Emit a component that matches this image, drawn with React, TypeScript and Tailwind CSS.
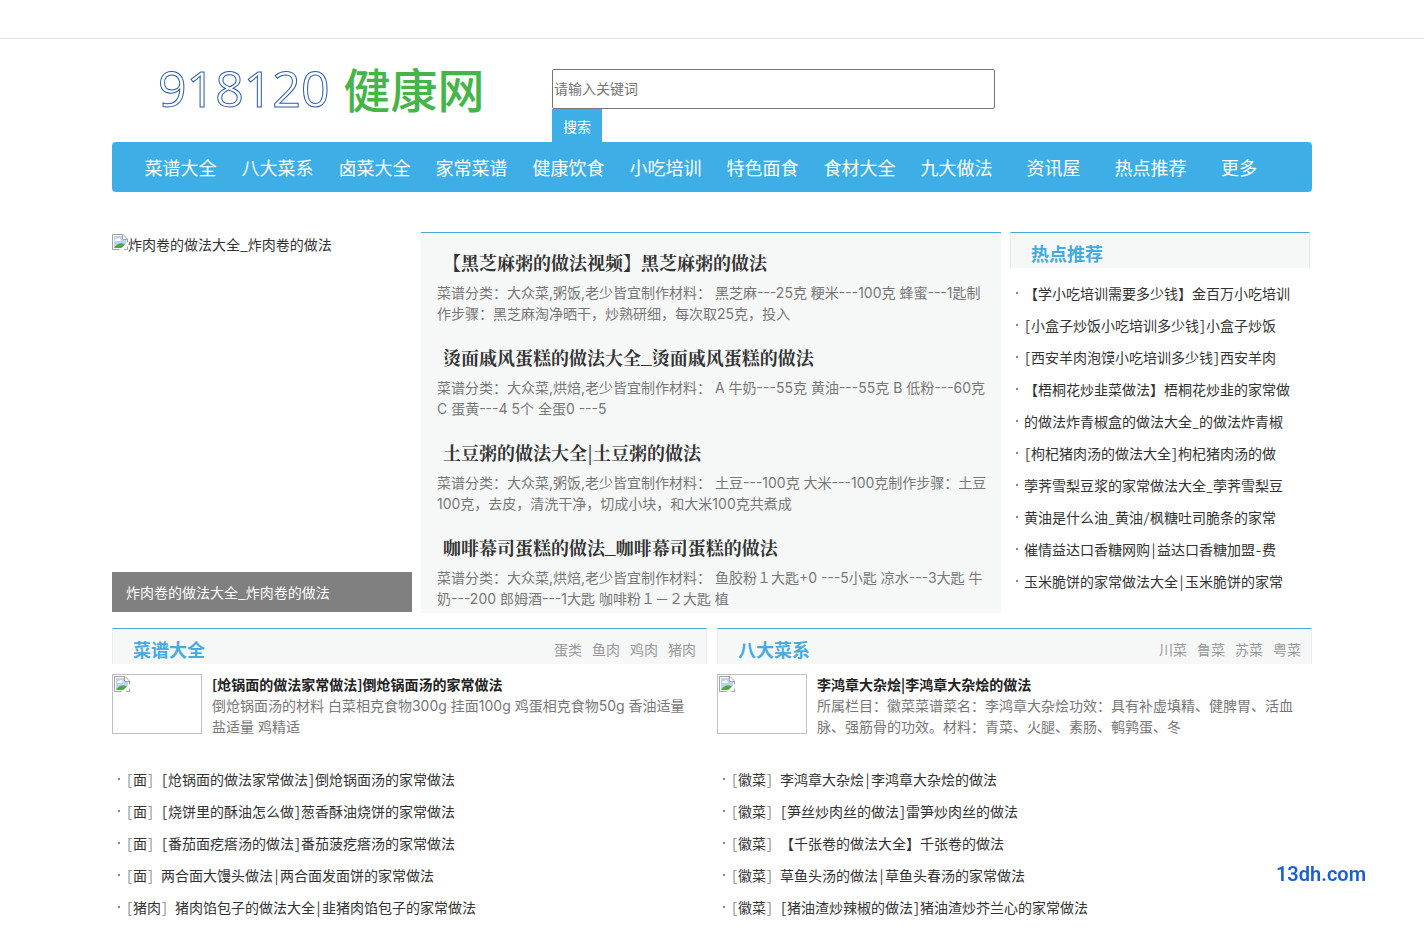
type Article = {
  title: string;
  summary: string;
};

type Entry = {
  category: string;
  title: string;
};

type Section = {
  name: string;
  links: string[];
  lead: Article;
  entries: Entry[];
};

const navItems = [
  "菜谱大全",
  "八大菜系",
  "卤菜大全",
  "家常菜谱",
  "健康饮食",
  "小吃培训",
  "特色面食",
  "食材大全",
  "九大做法",
  "资讯屋",
  "热点推荐",
];

const articles: Article[] = [
  {
    title: "【黑芝麻粥的做法视频】黑芝麻粥的做法",
    summary:
      "菜谱分类：大众菜,粥饭,老少皆宜制作材料： 黑芝麻---25克 粳米---100克 蜂蜜---1匙制\n作步骤：黑芝麻淘净晒干，炒熟研细，每次取25克，投入",
  },
  {
    title: "烫面戚风蛋糕的做法大全_烫面戚风蛋糕的做法",
    summary:
      "菜谱分类：大众菜,烘焙,老少皆宜制作材料： A 牛奶---55克 黄油---55克 B 低粉---60克\nC 蛋黄---4 5个 全蛋0 ---5",
  },
  {
    title: "土豆粥的做法大全|土豆粥的做法",
    summary:
      "菜谱分类：大众菜,粥饭,老少皆宜制作材料： 土豆---100克 大米---100克制作步骤：土豆\n100克，去皮，清洗干净，切成小块，和大米100克共煮成",
  },
  {
    title: "咖啡幕司蛋糕的做法_咖啡幕司蛋糕的做法",
    summary:
      "菜谱分类：大众菜,烘焙,老少皆宜制作材料： 鱼胶粉１大匙+0 ---5小匙 凉水---3大匙 牛\n奶---200 郎姆酒---1大匙 咖啡粉１－２大匙 植",
  },
];

const hotItems = [
  "【学小吃培训需要多少钱】金百万小吃培训",
  "[小盒子炒饭小吃培训多少钱]小盒子炒饭",
  "[西安羊肉泡馍小吃培训多少钱]西安羊肉",
  "【梧桐花炒韭菜做法】梧桐花炒韭的家常做",
  "的做法炸青椒盒的做法大全_的做法炸青椒",
  "[枸杞猪肉汤的做法大全]枸杞猪肉汤的做",
  "荸荠雪梨豆浆的家常做法大全_荸荠雪梨豆",
  "黄油是什么油_黄油/枫糖吐司脆条的家常",
  "催情益达口香糖网购|益达口香糖加盟-费",
  "玉米脆饼的家常做法大全|玉米脆饼的家常",
];

const sections: Section[] = [
  {
    name: "菜谱大全",
    links: ["蛋类", "鱼肉", "鸡肉", "猪肉"],
    lead: {
      title: "[炝锅面的做法家常做法]倒炝锅面汤的家常做法",
      summary: "倒炝锅面汤的材料 白菜相克食物300g 挂面100g 鸡蛋相克食物50g 香油适量\n盐适量 鸡精适",
    },
    entries: [
      { category: "面", title: "[炝锅面的做法家常做法]倒炝锅面汤的家常做法" },
      { category: "面", title: "[烧饼里的酥油怎么做]葱香酥油烧饼的家常做法" },
      { category: "面", title: "[番茄面疙瘩汤的做法]番茄菠疙瘩汤的家常做法" },
      { category: "面", title: "两合面大馒头做法|两合面发面饼的家常做法" },
      { category: "猪肉", title: "猪肉馅包子的做法大全|韭猪肉馅包子的家常做法" },
    ],
  },
  {
    name: "八大菜系",
    links: ["川菜", "鲁菜", "苏菜", "粤菜"],
    lead: {
      title: "李鸿章大杂烩|李鸿章大杂烩的做法",
      summary: "所属栏目：徽菜菜谱菜名：李鸿章大杂烩功效：具有补虚填精、健脾胃、活血\n脉、强筋骨的功效。材料：青菜、火腿、素肠、鹌鹑蛋、冬",
    },
    entries: [
      { category: "徽菜", title: "李鸿章大杂烩|李鸿章大杂烩的做法" },
      { category: "徽菜", title: "[笋丝炒肉丝的做法]雷笋炒肉丝的做法" },
      { category: "徽菜", title: "【千张卷的做法大全】千张卷的做法" },
      { category: "徽菜", title: "草鱼头汤的做法|草鱼头春汤的家常做法" },
      { category: "徽菜", title: "[猪油渣炒辣椒的做法]猪油渣炒芥兰心的家常做法" },
    ],
  },
];

function MissingImage() {
  return (
    <svg width="16" height="16" viewBox="0 0 16 16" className="shrink-0" aria-hidden="true">
      <path d="M0.5 0.5H11L15.5 5V15.5H0.5Z" fill="#fff" stroke="#a3a3a3" />
      <path d="M2 2H10V6H14V14H2Z" fill="#bdd1f5" />
      <path d="M3 7a1.7 1.7 0 0 1 2.4-2a1.7 1.7 0 0 1 3 2Z" fill="#fff" />
      <path d="M2 14C3.5 11.5 6 9.3 9 9.3C10.5 9.3 12 10 13 11V14Z" fill="#4fa83d" />
      <path d="M10.5 0.5V5.5H15.5" fill="none" stroke="#a3a3a3" />
      <path d="M7 16L16 8V12L11.5 16Z" fill="#fff" />
    </svg>
  );
}

function Bullet() {
  return <span className="mx-1.5 size-0.5 shrink-0 bg-[#888]" />;
}

function PanelHeader({ name, links = [] }: { name: string; links?: string[] }) {
  return (
    <div className="flex h-9 items-center justify-between border-x border-t border-x-[#e6eeee] border-t-[#4fa9cf] bg-[#f6f8f8] pt-1 pr-2.5 pl-5">
      <h2 className="text-lg font-bold text-[#45aae0]">{name}</h2>
      <div className="flex gap-2.5 text-sm text-[#999]">
        {links.map((link) => (
          <a key={link} href="#">
            {link}
          </a>
        ))}
      </div>
    </div>
  );
}

function SectionPanel({ section }: { section: Section }) {
  return (
    <section>
      <PanelHeader name={section.name} links={section.links} />
      <div className="mt-2.5 flex gap-2.5">
        <a href="#" aria-label={section.lead.title} className="h-[60px] w-[90px] shrink-0 border border-[#c0c0c0] p-px">
          <MissingImage />
        </a>
        <div className="text-sm leading-[21px]">
          <h3 className="font-bold text-[#222]">
            <a href="#">{section.lead.title}</a>
          </h3>
          <p className="font-['Inter','Noto_Sans_CJK_SC',sans-serif] whitespace-pre-line text-[#777]">
            {section.lead.summary}
          </p>
        </div>
      </div>
      <ul className="mt-[26px] font-['Noto_Sans_Mono_CJK_SC','Noto_Sans_CJK_SC',monospace] text-sm leading-8 text-[#333]">
        {section.entries.map((entry) => (
          <li key={entry.title} className="flex items-center whitespace-pre">
            <Bullet />
            <span className="text-[#888]">
              [
              <a href="#" className="text-[#333]">
                {entry.category}
              </a>
              ]{" "}
            </span>
            <a href="#">{entry.title}</a>
          </li>
        ))}
      </ul>
    </section>
  );
}

export default function App() {
  return (
    <div className="min-h-screen bg-white font-['Noto_Sans_CJK_SC',sans-serif] text-sm text-[#333]">
      <div className="h-[39px] border-b border-[#e5e5e5]" />

      <div className="mx-auto w-full max-w-[1200px]">
        <header className="flex">
          <a href="#" className="flex w-[440px] shrink-0 items-center gap-3.5 pb-1.5 pl-[46px] whitespace-nowrap">
            <span className="font-['Open_Sans',sans-serif] text-[50px] leading-none text-white [-webkit-text-stroke:1px_#2a5ca8]">
              918120
            </span>
            <span className="text-[47px] leading-none font-medium text-[#45b549]">健康网</span>
          </a>
          <form className="mt-[30px] w-[443px]" onSubmit={(e) => e.preventDefault()}>
            <input
              type="text"
              aria-label="请输入关键词"
              placeholder="请输入关键词"
              className="block h-10 w-full rounded-xs border border-[#767676] px-px pb-0.5 text-sm placeholder:text-[#757575]"
            />
            <button type="submit" className="block h-[33px] w-[50px] bg-[#3eafe6] text-sm text-white">
              搜索
            </button>
          </form>
        </header>

        <nav className="flex h-[50px] items-center rounded-sm bg-[#3eafe6] px-5 text-lg text-white">
          {navItems.map((item) => (
            <a key={item} href="#" className="w-[97px] text-center">
              {item}
            </a>
          ))}
          <a href="#" className="w-20 text-center">
            更多
          </a>
        </nav>

        <main className="mt-10">
          <div className="flex">
            <a href="#" className="mt-0.5 mb-px flex w-[300px] shrink-0 flex-col justify-between">
              <span className="flex">
                <MissingImage />
                <span>炸肉卷的做法大全_炸肉卷的做法</span>
              </span>
              <span className="h-10 bg-[#808080] pl-3.5 leading-10 text-white">炸肉卷的做法大全_炸肉卷的做法</span>
            </a>

            <div className="ml-[9px] flex-1 border-t border-[#4fa9cf] bg-[#f6f8f8] pt-[9px] pr-3 pb-1 pl-4">
              {articles.map((article) => (
                <article key={article.title} className="mb-[13px] last:mb-0">
                  <h2 className="pl-1.5 font-['Noto_Serif_CJK_SC','Noto_Sans_CJK_SC',serif] text-lg leading-10 font-bold">
                    <a href="#">{article.title}</a>
                  </h2>
                  <p className="font-['Inter','Noto_Sans_CJK_SC',sans-serif] leading-[21px] whitespace-pre-line text-[#777]">
                    {article.summary}
                  </p>
                </article>
              ))}
            </div>

            <aside className="mr-0.5 ml-[9px] w-[300px] shrink-0">
              <PanelHeader name="热点推荐" />
              <ul className="mt-[9px] font-['Noto_Sans_Mono_CJK_SC','Noto_Sans_CJK_SC',monospace] leading-8">
                {hotItems.map((item) => (
                  <li key={item} className="flex items-center whitespace-nowrap">
                    <Bullet />
                    <a href="#">{item}</a>
                  </li>
                ))}
              </ul>
            </aside>
          </div>

          <div className="mt-[15px] grid grid-cols-2 gap-2.5">
            {sections.map((section) => (
              <SectionPanel key={section.name} section={section} />
            ))}
          </div>
        </main>
      </div>

      <a
        href="#"
        className="fixed right-[58px] bottom-[45px] font-['Roboto',sans-serif] text-xl leading-7 font-semibold text-[#1c5fd0]"
      >
        13dh.com
      </a>
    </div>
  );
}
